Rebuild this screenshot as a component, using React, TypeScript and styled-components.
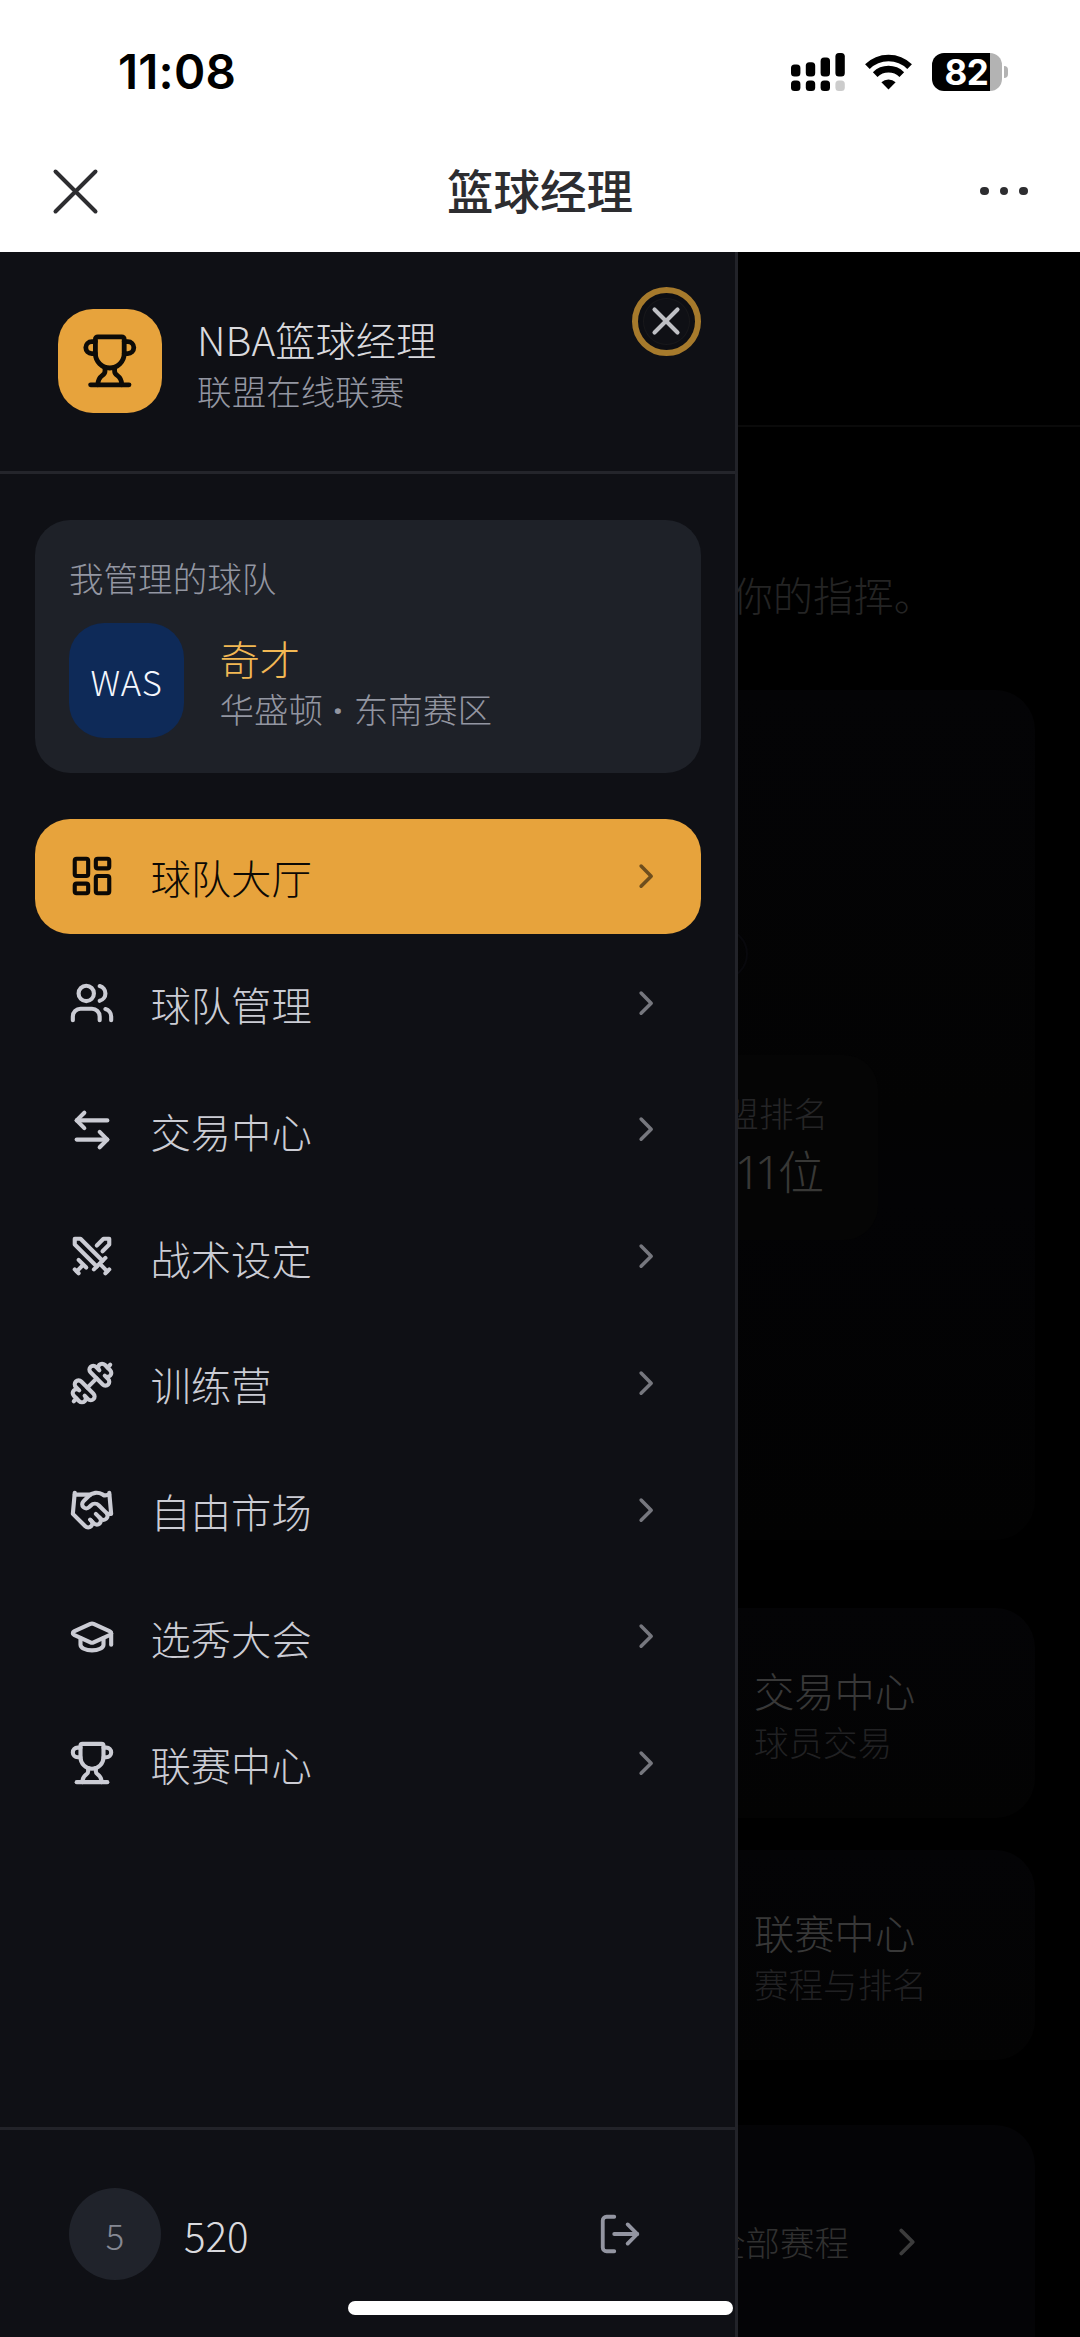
import React from "react";
import styled, { createGlobalStyle, css } from "styled-components";
import {
  ArrowLeftRight,
  ChevronRight,
  Dumbbell,
  GraduationCap,
  Handshake,
  LayoutDashboard,
  LogOut,
  Swords,
  Trophy,
  Users,
  X,
  type LucideIcon,
} from "lucide-react";

const cjk = `"Noto Sans CJK SC", "Noto Sans", sans-serif`;
const system = `Inter, "Noto Sans CJK SC", sans-serif`;

const GlobalStyle = createGlobalStyle`
  * { box-sizing: border-box; }
  body { margin: 0; background: #000; }
`;

const Screen = styled.div`
  width: 1080px;
  height: 2337px;
  display: flex;
  flex-direction: column;
  overflow: hidden;
  background: #fff;
  font-family: ${cjk};
  font-weight: 300;
`;

/* ---------- system chrome ---------- */

const StatusBar = styled.div`
  height: 144px;
  flex: none;
  display: flex;
  justify-content: space-between;
  align-items: center;
  padding: 0 72px 0 118px;
`;

const Clock = styled.div`
  font: 600 47.5px/56px ${system};
  letter-spacing: 0.2px;
  color: #000;
`;

const StatusIcons = styled.div`
  display: flex;
  align-items: center;
  gap: 20px;
`;

const Battery = styled.div`
  display: flex;
  align-items: center;
  gap: 2px;
`;

const BatteryBody = styled.div`
  width: 70px;
  height: 38px;
  border-radius: 12px;
  background: linear-gradient(90deg, #000 58px, #b3b3b3 58px);
  font: 700 35px/38px ${system};
  letter-spacing: -0.5px;
  padding-left: 12.5px;
  color: #fff;
`;

const BatteryTip = styled.div`
  width: 4px;
  height: 12px;
  border-radius: 0 6px 6px 0;
  background: #b3b3b3;
`;

const TitleBar = styled.div`
  height: 108px;
  flex: none;
  display: grid;
  grid-template-columns: 1fr auto 1fr;
  align-items: center;
  padding: 0 52px 14px;
`;

const PageTitle = styled.div`
  font: 500 46.5px/60px ${cjk};
  padding-bottom: 5px;
  color: #2d2d30;
`;

const Dots = styled.div`
  display: flex;
  justify-content: flex-end;
  gap: 11px;
`;

const Dot = styled.span`
  width: 8.6px;
  height: 8.6px;
  border-radius: 50%;
  background: #2d2d30;
`;

/* ---------- dimmed page ---------- */

const Stage = styled.div`
  position: relative;
  flex: 1;
  min-height: 0;
  background: #000;
  overflow: hidden;
`;

const TopStrip = styled.div`
  height: 175px;
  border-bottom: 2px solid #0a0a0a;
`;

const Page = styled.div`
  display: flex;
  flex-direction: column;
  padding: 138px 45px 0;
`;

const Intro = styled.div`
  font-size: 40.3px;
  line-height: 58px;
  text-align: right;
  padding-right: 101px;
  color: #242424;
`;

const Hero = styled.div`
  height: 850px;
  margin-top: 67px;
  padding: 238px 157px 0 0;
  border-radius: 40px;
  background: linear-gradient(#040406, #030303 50%, #030305 60%, #020202);
  display: flex;
  flex-direction: column;
  align-items: flex-end;
`;

const Pill = styled.div`
  width: 300px;
  height: 52px;
  margin-right: 130px;
  border: 2px solid #08080c;
  border-radius: 26px;
`;

const RankBox = styled.div`
  width: 370px;
  height: 185px;
  margin-top: 75px;
  padding: 34px 50px 0 0;
  border-radius: 34px;
  background: #050505;
  text-align: right;
`;

const RankLabel = styled.div`
  font-size: 34.56px;
  line-height: 46px;
  color: #252527;
`;

const RankValue = styled.div`
  font-size: 46px;
  line-height: 68px;
  padding-right: 4px;
  color: #383836;
`;

const RankNumber = styled.span`
  font-family: "Noto Sans", sans-serif;
  letter-spacing: -6px;
  margin-right: 3px;
`;

const Shortcuts = styled.div`
  display: grid;
  grid-template-columns: 1fr 1fr;
  gap: 32px;
  margin-top: 68px;
`;

const Shortcut = styled.div`
  grid-column: 2;
  height: 210px;
  padding: 52.5px 0 0 198px;
  border-radius: 40px;
  background: linear-gradient(#040406, #030303);
`;

const ShortcutTitle = styled.div`
  font-size: 40.3px;
  line-height: 57.6px;
  color: #383838;
`;

const ShortcutNote = styled.div`
  font-size: 34.56px;
  line-height: 46px;
  color: #212123;
`;

const Schedule = styled.div`
  height: 260px;
  margin-top: 65px;
  padding: 87px 105px 0 0;
  border-radius: 40px;
  background: #040406;
  display: flex;
  justify-content: flex-end;
  gap: 35px;
  font-size: 34.56px;
  line-height: 58px;
  color: #303030;

  svg { margin-top: 7px; color: #3c3c3c; }
`;

/* ---------- drawer ---------- */

const Drawer = styled.aside`
  position: absolute;
  inset: 0 auto 0 0;
  width: 738px;
  display: flex;
  flex-direction: column;
  border-right: 3px solid #222329;
  background: #0f1015;
`;

const DrawerHeader = styled.header`
  height: 221.5px;
  flex: none;
  display: flex;
  align-items: center;
  gap: 34.5px;
  padding: 0 57.6px;
  border-bottom: 3px solid #24252b;
`;

const Brand = styled.div`
  width: 104px;
  height: 104px;
  display: grid;
  place-items: center;
  border-radius: 35px;
  background: #e7a33c;
  color: #0d0b08;
`;

const Stack = styled.div`
  display: flex;
  flex-direction: column;
  padding-left: 1px;
`;

const Strong = styled.div<{ $gold?: boolean }>`
  font-size: 40.3px;
  line-height: 57.6px;
  padding-top: 1px;
  margin-bottom: -1px;
  color: ${(p) => (p.$gold ? "#f2b854" : "#dadade")};
`;

const Muted = styled.div`
  font-size: 34.56px;
  line-height: 46px;
  color: #9396a1;
`;

const Separator = styled.span`
  font-family: "Noto Sans", sans-serif;
  font-weight: 700;
  letter-spacing: 1px;
  white-space: pre;
`;

const CloseButton = styled.button`
  position: absolute;
  top: 34.5px;
  right: 34.5px;
  width: 69px;
  height: 69px;
  padding: 0;
  display: grid;
  place-items: center;
  border: 6px solid #a67a2c;
  border-radius: 50%;
  background: #0f1015;
  color: #bfc0c5;
  box-shadow: inset 0 0 0 5px #0d0e13, inset 0 0 0 6px #18181b;
`;

const TeamCard = styled.section`
  flex: none;
  margin: 46px 34.5px 0;
  padding: 34.5px;
  border-radius: 35px;
  background: #1e2128;
`;

const TeamRow = styled.div`
  display: flex;
  align-items: center;
  gap: 34.5px;
  margin-top: 23px;
`;

const TeamBadge = styled.div`
  width: 115px;
  height: 115px;
  border-radius: 35px;
  background: #0e2a58;
  color: #f4f7fd;
  font-size: 34.56px;
  letter-spacing: 0.7px;
  line-height: 116px;
  text-align: center;
`;

const Nav = styled.nav`
  flex: 1;
  display: flex;
  flex-direction: column;
  gap: 11.55px;
  padding: 46px 34.5px 0;
`;

const NavItem = styled.a<{ $active?: boolean }>`
  height: 115.2px;
  display: flex;
  align-items: center;
  padding: 0 34.5px;
  border-radius: 35px;
  color: #cbccd4;

  ${(p) =>
    p.$active &&
    css`
      background: #e7a33c;
      color: #0c0905;
    `}
`;

const NavLabel = styled.span`
  flex: 1;
  margin-left: 35.5px;
  padding-top: 2px;
  font-size: 40.3px;
  line-height: 57.6px;
`;

const Chevron = styled(ChevronRight)`
  opacity: 0.55;
`;

const DrawerFooter = styled.footer`
  height: 210px;
  flex: none;
  display: flex;
  align-items: center;
  padding: 0 69px;
  border-top: 3px solid #222329;
`;

const Avatar = styled.div`
  width: 92px;
  height: 92px;
  border-radius: 50%;
  background: #20232b;
  color: #858893;
  font-size: 34.56px;
  line-height: 94px;
  text-align: center;
`;

const UserName = styled.span`
  flex: 1;
  margin-left: 23px;
  padding-top: 3px;
  font-size: 40.3px;
  line-height: 57.6px;
  color: #dadade;
`;

const SignOut = styled.button`
  width: 92px;
  height: 92px;
  padding: 0;
  display: grid;
  place-items: center;
  border: 0;
  background: none;
  color: #9395a1;
`;

const HomeIndicator = styled.div`
  position: absolute;
  left: 348px;
  bottom: 22px;
  width: 385px;
  height: 14px;
  border-radius: 7px;
  background: #fff;
`;

const items: { label: string; icon: LucideIcon }[] = [
  { label: "球队大厅", icon: LayoutDashboard },
  { label: "球队管理", icon: Users },
  { label: "交易中心", icon: ArrowLeftRight },
  { label: "战术设定", icon: Swords },
  { label: "训练营", icon: Dumbbell },
  { label: "自由市场", icon: Handshake },
  { label: "选秀大会", icon: GraduationCap },
  { label: "联赛中心", icon: Trophy },
];

const shortcuts = [
  { title: "交易中心", note: "球员交易" },
  { title: "联赛中心", note: "赛程与排名" },
];

const SignalIcon = () => (
  <svg width="54" height="38" viewBox="0 0 54 38">
    <rect x="0" y="11.5" width="9.4" height="12" rx="3.5" />
    <rect x="14.8" y="9.2" width="9.4" height="14.3" rx="3.5" />
    <rect x="29.6" y="4.5" width="9.4" height="19" rx="3.5" />
    <rect x="44.4" y="0" width="9.4" height="23.5" rx="3.5" />
    <rect x="0" y="27.5" width="9.4" height="10.5" rx="3.5" />
    <rect x="14.8" y="27.5" width="9.4" height="10.5" rx="3.5" />
    <rect x="29.6" y="27.5" width="9.4" height="10.5" rx="3.5" />
    <rect x="44.4" y="27.5" width="9.4" height="10.5" rx="3.5" fill="#ccc" />
  </svg>
);

const WifiIcon = () => (
  <svg width="47" height="36" viewBox="0 0 47 36" fill="none" stroke="#000" strokeWidth="6.6">
    <path d="M2.4 12.6a30 30 0 0 1 42.2 0" />
    <path d="M10.2 20.6a19 19 0 0 1 26.6 0" />
    <path d="M23.5 35.4l-7.1-7.2a10.4 10.4 0 0 1 14.2 0z" fill="#000" stroke="none" />
  </svg>
);

const CloseIcon = () => (
  <svg width="47" height="47" viewBox="0 0 47 47" stroke="#2d2d30" strokeWidth="4" strokeLinecap="round">
    <path d="M3.5 3.5l40 40M43.5 3.5l-40 40" />
  </svg>
);

export default function App() {
  return (
    <Screen>
      <GlobalStyle />
      <StatusBar>
        <Clock>11:08</Clock>
        <StatusIcons>
          <SignalIcon />
          <WifiIcon />
          <Battery>
            <BatteryBody>82</BatteryBody>
            <BatteryTip />
          </Battery>
        </StatusIcons>
      </StatusBar>
      <TitleBar>
        <CloseIcon />
        <PageTitle>篮球经理</PageTitle>
        <Dots>
          <Dot />
          <Dot />
          <Dot />
        </Dots>
      </TitleBar>

      <Stage>
        <TopStrip />
        <Page>
          <Intro>你的指挥。</Intro>
          <Hero>
            <Pill />
            <RankBox>
              <RankLabel>联盟排名</RankLabel>
              <RankValue>
                <RankNumber>11</RankNumber>位
              </RankValue>
            </RankBox>
          </Hero>
          <Shortcuts>
            {shortcuts.map((s) => (
              <Shortcut key={s.title}>
                <ShortcutTitle>{s.title}</ShortcutTitle>
                <ShortcutNote>{s.note}</ShortcutNote>
              </Shortcut>
            ))}
          </Shortcuts>
          <Schedule>
            全部赛程
            <ChevronRight size={46} />
          </Schedule>
        </Page>

        <Drawer>
          <DrawerHeader>
            <Brand>
              <Trophy size={57.6} />
            </Brand>
            <Stack>
              <Strong>NBA篮球经理</Strong>
              <Muted>联盟在线联赛</Muted>
            </Stack>
            <CloseButton>
              <X size={46} strokeWidth={2.15} />
            </CloseButton>
          </DrawerHeader>
          <TeamCard>
            <Muted>我管理的球队</Muted>
            <TeamRow>
              <TeamBadge>WAS</TeamBadge>
              <Stack>
                <Strong $gold>奇才</Strong>
                <Muted>
                  华盛顿<Separator> · </Separator>东南赛区
                </Muted>
              </Stack>
            </TeamRow>
          </TeamCard>
          <Nav>
            {items.map(({ label, icon: Icon }, i) => (
              <NavItem key={label} $active={i === 0}>
                <Icon size={46} strokeWidth={2.15} />
                <NavLabel>{label}</NavLabel>
                <Chevron size={40.3} strokeWidth={2.1} />
              </NavItem>
            ))}
          </Nav>
          <DrawerFooter>
            <Avatar>5</Avatar>
            <UserName>520</UserName>
            <SignOut>
              <LogOut size={46} />
            </SignOut>
          </DrawerFooter>
        </Drawer>
        <HomeIndicator />
      </Stage>
    </Screen>
  );
}
